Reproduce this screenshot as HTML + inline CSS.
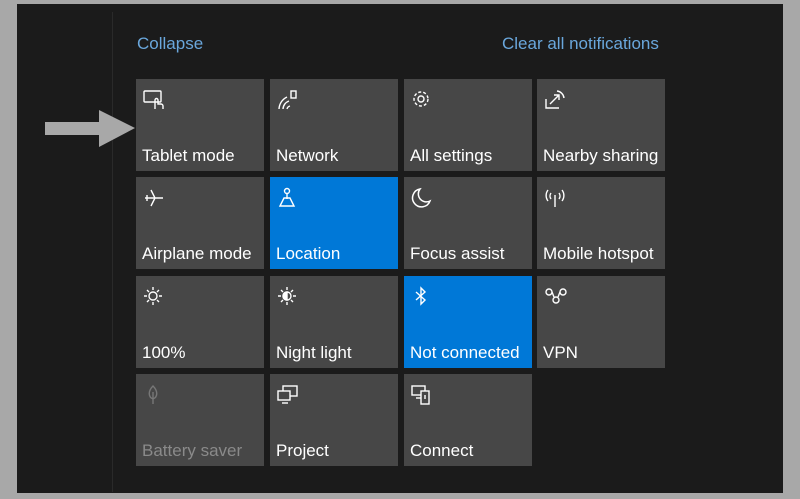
<!DOCTYPE html><html><head><style>
body{margin:0;width:800px;height:499px;background:#a8a8a8;position:relative;overflow:hidden;font-family:"Liberation Sans",sans-serif}
.bg{position:absolute;left:17px;top:4px;width:766px;height:489px;background:#1b1b1b}
.ln{position:absolute;left:112px;top:12px;width:1px;height:480px;background:#2a2a2a}
.lk{position:absolute;top:34px;color:#6aa7dc;font-size:17px}
.t{position:absolute;width:128px;height:92px;background:#474747;color:#fff;font-size:17px}
.t.b{background:#0078d7}
.t span{position:absolute;left:6px;top:67px;white-space:nowrap}
.t svg{position:absolute;left:7px;top:10px}
.dis{color:#8a8a8a}
</style></head><body>
<div class="bg"></div><div class="ln"></div>
<div class="lk" style="left:137px">Collapse</div>
<div class="lk" style="left:502px">Clear all notifications</div>
<svg style="position:absolute;left:45px;top:110px" width="92" height="38"><polygon points="0,12 54,12 54,0 90,18 54,37 54,25 0,25" fill="#a8a8a8"/></svg>
<div class="t" style="left:136px;top:79px"><svg width="26" height="22" fill="none" stroke="#fff" stroke-width="1.4"><rect x="1" y="2" width="17" height="11" rx="1"/><path d="M12 20v-9a1.5 1.5 0 0 1 3 0v4h3a2 2 0 0 1 2 2v3"/></svg><span>Tablet mode</span></div>
<div class="t" style="left:270px;top:79px"><svg width="22" height="22" fill="none" stroke="#fff" stroke-width="1.4"><path d="M2 20a14 14 0 0 1 8-12M6 20a9 9 0 0 1 6-8M10 20a4 4 0 0 1 3-3"/><rect x="14" y="2" width="5" height="7"/></svg><span>Network</span></div>
<div class="t" style="left:404px;top:79px"><svg width="22" height="22" fill="none" stroke="#fff" stroke-width="1.4"><circle cx="10" cy="10" r="3"/><circle cx="10" cy="10" r="7" stroke-dasharray="3 2"/></svg><span>All settings</span></div>
<div class="t" style="left:537px;top:79px"><svg width="22" height="22" fill="none" stroke="#fff" stroke-width="1.4"><path d="M2 10v9h13M6 15l9-9M10 6h5v5M13 2a8 8 0 0 1 7 7"/></svg><span>Nearby sharing</span></div>
<div class="t" style="left:136px;top:177px"><svg width="24" height="22" fill="none" stroke="#fff" stroke-width="1.4"><path d="M2 11h18M8 3l4 8-4 8M4 8v6"/></svg><span>Airplane mode</span></div>
<div class="t b" style="left:270px;top:177px"><svg width="22" height="22" fill="none" stroke="#fff" stroke-width="1.4"><circle cx="10" cy="4" r="2.5"/><path d="M10 7v5M3 19l4-8h6l4 8z"/></svg><span>Location</span></div>
<div class="t" style="left:404px;top:177px"><svg width="22" height="22" fill="none" stroke="#fff" stroke-width="1.5"><path d="M9 2a9 9 0 1 0 10 12A8 8 0 0 1 9 2z"/></svg><span>Focus assist</span></div>
<div class="t" style="left:537px;top:177px"><svg width="24" height="22" fill="none" stroke="#fff" stroke-width="1.4"><path d="M11 8v12M4 3a9 9 0 0 0 0 11M18 3a9 9 0 0 1 0 11M7 6a5 5 0 0 0 0 6M15 6a5 5 0 0 1 0 6"/></svg><span>Mobile hotspot</span></div>
<div class="t" style="left:136px;top:276px"><svg width="22" height="22" fill="none" stroke="#fff" stroke-width="1.4"><circle cx="10" cy="10" r="4"/><path d="M10 1v3M10 16v3M1 10h3M16 10h3M4 4l2 2M14 14l2 2M4 16l2-2M14 6l2-2"/></svg><span>100%</span></div>
<div class="t" style="left:270px;top:276px"><svg width="22" height="22" fill="none" stroke="#fff" stroke-width="1.4"><circle cx="10" cy="10" r="4"/><path d="M10 6a4 4 0 0 0 0 8z" fill="#fff"/><path d="M10 1v3M10 16v3M1 10h3M16 10h3M4 4l2 2M14 14l2 2M4 16l2-2M14 6l2-2"/></svg><span>Night light</span></div>
<div class="t b" style="left:404px;top:276px"><svg width="22" height="22" fill="none" stroke="#fff" stroke-width="1.4"><path d="M5 6l9 8-4 4V2l4 4-9 8"/></svg><span>Not connected</span></div>
<div class="t" style="left:537px;top:276px"><svg width="26" height="22" fill="none" stroke="#fff" stroke-width="1.4"><circle cx="5" cy="6" r="3"/><circle cx="19" cy="6" r="3"/><circle cx="12" cy="14" r="3"/><path d="M8 6l2 5M16 6l-2 5"/></svg><span>VPN</span></div>
<div class="t" style="left:136px;top:374px"><svg width="22" height="22" fill="none" stroke="#777" stroke-width="1.4"><path d="M10 2c-5 5-5 11 0 13c5-2 5-8 0-13zM10 15v5M10 8v7"/></svg><span class="dis">Battery saver</span></div>
<div class="t" style="left:270px;top:374px"><svg width="24" height="22" fill="none" stroke="#fff" stroke-width="1.4"><rect x="6" y="2" width="14" height="10"/><rect x="1" y="7" width="12" height="9" fill="#474747"/><path d="M5 19h6"/></svg><span>Project</span></div>
<div class="t" style="left:404px;top:374px"><svg width="24" height="22" fill="none" stroke="#fff" stroke-width="1.4"><rect x="1" y="2" width="13" height="9"/><path d="M5 14h6"/><rect x="10" y="7" width="8" height="13" fill="#474747"/><path d="M14 11v4"/></svg><span>Connect</span></div>
</body></html>
